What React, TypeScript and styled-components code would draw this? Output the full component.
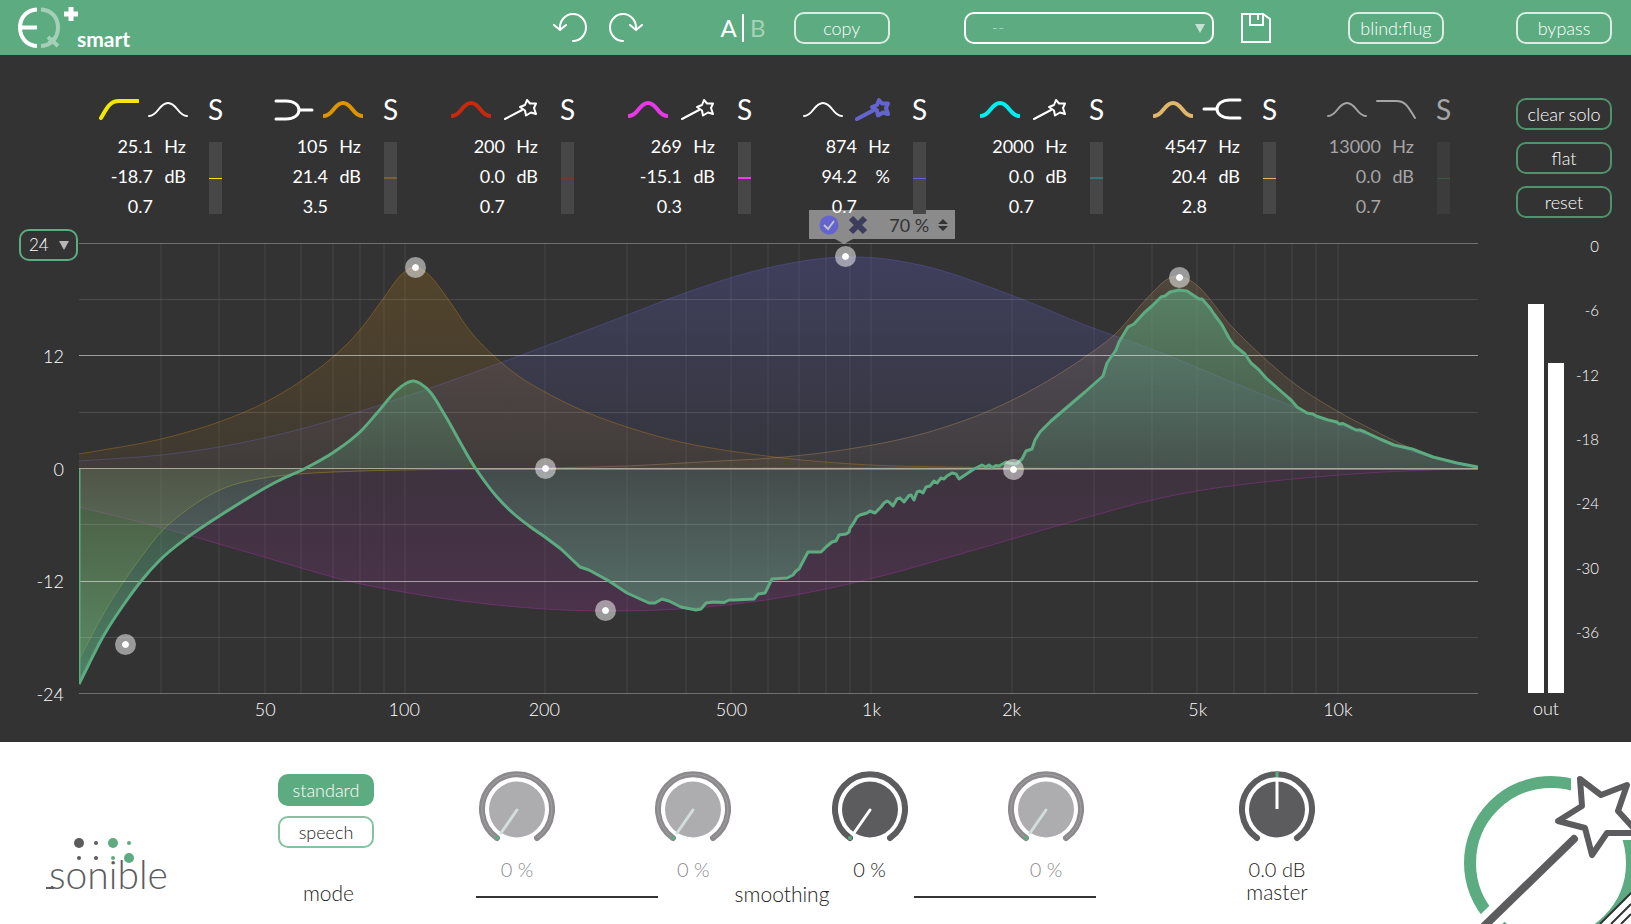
import React from "react";
import styled, { createGlobalStyle } from "styled-components";

const GREEN = "#5dab80";
const DARK = "#333333";
const GREY = "#5c5c5e";

const GlobalStyle = createGlobalStyle`
  *, *::before, *::after { box-sizing: border-box; }
  body {
    margin: 0;
    background: #fff;
    color: #fff;
    font-family: Lato, "Liberation Sans", sans-serif;
    font-size: 18px;
    font-weight: 300;
  }
  button, input, select { font: inherit; color: inherit; }
  button { padding: 0; border: 0; background: none; cursor: pointer; }
`;

const Page = styled.div`
  display: flex;
  flex-direction: column;
  min-height: 100vh;
`;

/* ---------- header ---------- */

const Header = styled.header`
  display: flex;
  align-items: center;
  height: 55px;
  padding: 0 19px 0 18px;
  background: ${GREEN};
`;

const Spacer = styled.div<{ $grow: number }>`
  flex: ${(p) => p.$grow} 1 0;
`;

const Brand = styled.div`
  display: flex;
  align-items: flex-end;
  width: 115px;
  height: 55px;
  padding-bottom: 6px;
`;

const BrandMark = styled.svg`
  flex: none;
  margin-right: -2px;
`;

const BrandName = styled.span`
  font-size: 21px;
  font-weight: 700;
  line-height: 20px;
`;

const IconButton = styled.button`
  display: flex;
  flex: none;
`;

const HistoryGroup = styled.div`
  display: flex;
  gap: 22px;
`;

const CompareGroup = styled.div`
  display: flex;
  align-items: center;
  justify-content: space-between;
  width: 43px;
`;

const CompareButton = styled.button<{ $dim?: boolean }>`
  display: flex;
  justify-content: center;
  width: 14px;
  font-size: 24px;
  font-weight: 400;
  line-height: 28px;
  opacity: ${(p) => (p.$dim ? 0.45 : 1)};
`;

const CompareRule = styled.span`
  width: 2px;
  height: 28px;
  background: #fff;
`;

const PillButton = styled.button<{ $line: string; $fill?: string; $ink?: string }>`
  flex: none;
  width: 96px;
  height: 32px;
  border: 2px solid ${(p) => p.$line};
  border-radius: 10px;
  background: ${(p) => p.$fill ?? "transparent"};
  color: ${(p) => p.$ink ?? "#fff"};
  line-height: 28px;
  white-space: nowrap;
`;

const Gap = styled.div<{ $w: number }>`
  flex: none;
  width: ${(p) => p.$w}px;
`;

const SelectWrap = styled.label<{ $w: number }>`
  position: relative;
  display: block;
  flex: none;
  width: ${(p) => p.$w}px;
  height: 32px;
`;

const SelectBox = styled.select<{ $line: string; $pad: number; $dim?: boolean }>`
  width: 100%;
  height: 32px;
  padding: 0 0 0 ${(p) => p.$pad}px;
  border: 2px solid ${(p) => p.$line};
  border-radius: 10px;
  background: transparent;
  color: ${(p) => (p.$dim ? "#b5d8c4" : "#fff")};
  font-size: 17px;
  line-height: 28px;
  appearance: none;
`;

const SelectArrow = styled.span<{ $right: number }>`
  position: absolute;
  top: 12px;
  right: ${(p) => p.$right}px;
  border: 5px solid transparent;
  border-top: 9px solid rgba(255, 255, 255, 0.65);
  border-bottom: 0;
  pointer-events: none;
`;

/* ---------- workspace ---------- */

const Workspace = styled.main`
  display: flex;
  flex: 1;
  padding: 42px 0 20px;
  background: ${DARK};
`;

const Editor = styled.section`
  flex: 1;
  min-width: 0;
`;

const BandStrip = styled.div`
  position: relative;
  z-index: 2;
  display: grid;
  grid-template-columns: 175fr 177fr 177fr 175fr 177fr 173fr 174fr 151fr;
  height: 132px;
  padding-left: 99px;
`;

const BandBox = styled.div<{ $off?: boolean }>`
  width: 123px;
  color: ${(p) => (p.$off ? "#a6a6a6" : "#fff")};
`;

const BandHead = styled.div`
  display: flex;
  align-items: center;
  height: 24px;
`;

const SoloButton = styled.button`
  width: 16px;
  margin-left: 20px;
  font-size: 28px;
  font-weight: 400;
  line-height: 24px;
`;

const BandBody = styled.div`
  display: flex;
  margin-top: 10px;
`;

const BandValues = styled.div`
  display: grid;
  grid-template-columns: 54px 33px;
  grid-auto-rows: 30px;
  font-weight: 400;
  line-height: 30px;
  text-align: right;
`;

const BandMeter = styled.div<{ $off?: boolean }>`
  display: flex;
  align-items: center;
  width: 13px;
  height: 72px;
  margin: 11px 0 0 23px;
  background: ${(p) => (p.$off ? "#3c3c3c" : "#474747")};
`;

const BandMeterLine = styled.div<{ $color: string; $thick?: boolean }>`
  width: 13px;
  height: ${(p) => (p.$thick ? 2 : 1)}px;
  background: ${(p) => p.$color};
`;

const ChartRow = styled.div`
  display: flex;
  padding-left: 19px;
`;

const GainAxis = styled.div`
  display: flex;
  flex-direction: column;
  justify-content: space-between;
  width: 60px;
  height: 483px;
`;

const GainLabel = styled.span`
  height: 32px;
  padding-right: 15px;
  line-height: 28px;
  text-align: right;
`;

const PlotColumn = styled.div`
  flex: 1;
  min-width: 0;
  padding-top: 14px;
`;

const Plot = styled.div`
  position: relative;
  height: 451px;
`;

const PlotSvg = styled.svg`
  display: block;
  width: 100%;
  height: 451px;
`;

const Handle = styled.button<{ $x: number; $y: number }>`
  position: absolute;
  left: ${(p) => p.$x}%;
  top: ${(p) => p.$y}%;
  width: 21px;
  height: 21px;
  margin: -10px 0 0 -10px;
  border: 7px solid rgba(255, 255, 255, 0.5);
  border-radius: 50%;
  background: #fff;
  background-clip: padding-box;
`;

const Popover = styled.div`
  position: absolute;
  left: 54.7%;
  top: -33px;
  display: flex;
  align-items: center;
  width: 146px;
  height: 29px;
  margin-left: -35px;
  padding-left: 10px;
  background: rgba(255, 255, 255, 0.43);
  color: #333;
  &::after {
    content: "";
    position: absolute;
    top: 29px;
    left: 26px;
    border: 9px solid transparent;
    border-top: 5px solid rgba(255, 255, 255, 0.43);
    border-bottom: 0;
  }
`;

const AmountInput = styled.input`
  width: 46px;
  margin-left: 21px;
  padding: 0;
  border: 0;
  background: none;
  font-weight: 400;
  line-height: 24px;
`;

const FreqAxis = styled.div`
  display: grid;
  grid-template-columns:
    minmax(0, 186fr) 0 minmax(0, 139fr) 0 minmax(0, 140fr) 0 minmax(0, 187fr) 0
    minmax(0, 140fr) 0 minmax(0, 140fr) 0 minmax(0, 186fr) 0 minmax(0, 140fr) 0 minmax(0, 140fr);
  margin-top: 3px;
`;

const FreqLabel = styled.span<{ $i: number }>`
  grid-row: 1;
  grid-column: ${(p) => p.$i * 2 + 2};
  justify-self: center;
  line-height: 24px;
`;

const Side = styled.aside`
  width: 153px;
  padding: 1px 19px 0 0;
`;

const SideButtons = styled.div`
  display: flex;
  flex-direction: column;
  align-items: flex-end;
  gap: 12px;
`;

const OutputMeter = styled.div`
  display: flex;
  margin: 18px 0 0 50px;
`;

const OutputBars = styled.div`
  display: flex;
  align-items: flex-end;
  gap: 4px;
  width: 36px;
  height: 457px;
`;

const OutputBar = styled.div`
  width: 16px;
  background: #fff;
`;

const OutputCaption = styled.div`
  width: 36px;
  margin-top: 3px;
  line-height: 24px;
  text-align: center;
`;

const OutputScale = styled.div`
  display: flex;
  flex-direction: column;
  justify-content: space-between;
  width: 35px;
  height: 406px;
  font-size: 15px;
  line-height: 20px;
  text-align: right;
`;

/* ---------- footer ---------- */

const Footer = styled.footer`
  display: flex;
  height: 182px;
  padding-left: 46px;
  background: #fff;
  color: #222;
  overflow: hidden;
`;

const MakerLogo = styled.svg`
  flex: none;
  align-self: flex-end;
  margin-bottom: 20px;
  overflow: visible;
`;

const ModeColumn = styled.div`
  display: flex;
  flex-direction: column;
  gap: 10px;
  padding-top: 32px;
`;

const Caption = styled.div`
  font-size: 21px;
  line-height: 24px;
  text-align: center;
`;

const ModeCaption = styled(Caption)`
  padding: 23px 0 0 5px;
`;

const Smoothing = styled.div`
  flex: 620 0 0;
  padding-top: 29px;
`;

const KnobRow = styled.div`
  display: flex;
  justify-content: space-between;
  padding: 0 12px 0 3px;
`;

const KnobBox = styled.label<{ $off?: boolean }>`
  position: relative;
  display: flex;
  flex-direction: column;
  align-items: center;
  width: 76px;
  color: ${(p) => (p.$off ? "#8c8c8c" : "#222")};
`;

const KnobInput = styled.input`
  position: absolute;
  inset: 0;
  width: 76px;
  height: 76px;
  margin: 0;
  opacity: 0;
`;

const KnobValue = styled.span`
  margin: 10px 0 1px;
  font-size: 20px;
  line-height: 24px;
  white-space: nowrap;
`;

const CaptionRow = styled.div`
  display: grid;
  grid-template-columns: 182fr 256fr 182fr;
  align-items: center;
`;

const Rule = styled.div`
  height: 2px;
  margin-top: 6px;
  background: ${DARK};
`;

const SmoothingCaption = styled(Caption)`
  padding-right: 8px;
`;

const Master = styled.div`
  width: 76px;
  padding-top: 29px;
`;

const MasterCaption = styled(Caption)`
  line-height: 20px;
`;

const LearnButton = styled.button`
  display: block;
  flex: none;
  width: 170px;
  height: 182px;
`;

/* ---------- icons ---------- */

type Kind = "lowcut" | "highcut" | "bell" | "lowshelf" | "highshelf" | "wand";

const shapes: Record<Kind, string> = {
  lowcut: "M2 21C7 13 10 4 20 4H39",
  highcut: "M1 4H20C30 4 32 10 39 21",
  bell: "M1 19C10 19 11 6 20 6S30 19 39 19",
  lowshelf: "M2 4H12C20 4 25 8 25 13S20 22 12 22H2M25 13H38",
  highshelf: "M38 3H28C20 3 15 7 15 12S20 21 28 21H38M15 12H2",
  wand:
    "M5 22L22 13M27 3L30 6.500L36 6.500L34 11L36 17L31 15.500L26 18.500L25 13.500L20 10L25 8Z",
};

function Shape({ kind, color, off }: { kind: Kind; color?: string; off?: boolean }) {
  const width = color ? 4 : kind.endsWith("shelf") ? 3 : 2;
  return (
    <svg width="40" height="24" viewBox="0 0 40 24" fill="none" strokeLinecap="round" strokeLinejoin="round">
      <path d={shapes[kind]} stroke={color ?? (off ? "#a6a6a6" : "#fff")} strokeWidth={width} />
    </svg>
  );
}

interface Band {
  shapes: [Kind, Kind];
  active: number;
  color: string;
  line: string;
  thick?: boolean;
  freq: string;
  gain: string;
  unit: string;
  q: string;
  off?: boolean;
}

const bands: Band[] = [
  { shapes: ["lowcut", "bell"], active: 0, color: "#f2e900", line: "#f2e900", freq: "25.1", gain: "-18.7", unit: "dB", q: "0.7" },
  { shapes: ["lowshelf", "bell"], active: 1, color: "#dd9400", line: "#7a6230", thick: true, freq: "105", gain: "21.4", unit: "dB", q: "3.5" },
  { shapes: ["bell", "wand"], active: 0, color: "#c8280c", line: "#74392f", freq: "200", gain: "0.0", unit: "dB", q: "0.7" },
  { shapes: ["bell", "wand"], active: 0, color: "#e838e8", line: "#f03af0", thick: true, freq: "269", gain: "-15.1", unit: "dB", q: "0.3" },
  { shapes: ["bell", "wand"], active: 1, color: "#6464d0", line: "#6464d0", freq: "874", gain: "94.2", unit: "%", q: "0.7" },
  { shapes: ["bell", "wand"], active: 0, color: "#00eef0", line: "#2f7a76", thick: true, freq: "2000", gain: "0.0", unit: "dB", q: "0.7" },
  { shapes: ["bell", "highshelf"], active: 0, color: "#dfb76a", line: "#dfb76a", freq: "4547", gain: "20.4", unit: "dB", q: "2.8" },
  { shapes: ["bell", "highcut"], active: -1, color: "#3f5f48", line: "#3b5a44", freq: "13000", gain: "0.0", unit: "dB", q: "0.7", off: true },
];

function BandControls({ band, index }: { band: Band; index: number }) {
  return (
    <BandBox $off={band.off}>
      <BandHead>
        {band.shapes.map((kind, i) => (
          <React.Fragment key={i}>
            {i === 1 && <Gap $w={9} />}
            <IconButton aria-label={`band ${index + 1} ${kind}`}>
              <Shape kind={kind} color={band.active === i ? band.color : undefined} off={band.off} />
            </IconButton>
          </React.Fragment>
        ))}
        <SoloButton aria-label={`solo band ${index + 1}`}>S</SoloButton>
      </BandHead>
      <BandBody>
        <BandValues>
          <span>{band.freq}</span>
          <span>Hz</span>
          <span>{band.gain}</span>
          <span>{band.unit}</span>
          <span>{band.q}</span>
        </BandValues>
        <BandMeter $off={band.off}>
          <BandMeterLine $color={band.line} $thick={band.thick} />
        </BandMeter>
      </BandBody>
    </BandBox>
  );
}

/* ---------- plot ---------- */

const PLOT_W = 1399;
const PLOT_H = 451;
const ZERO = 226;

type Pt = [number, number];

/* Points of a response curve, stored as a flat x, y list. */
function pairs(list: string): Pt[] {
  return list
    .trim()
    .split(/\s+/)
    .map((p) => p.split(",").map(Number) as Pt);
}

/* Cubic Bezier curve through the points. The slope at each point weighs the
   two neighbouring segments by their lengths, so uneven spacing gives no kinks. */
function spline(p: Pt[]): string {
  const n = p.length;
  const seg = (i: number) => (p[i + 1][1] - p[i][1]) / (p[i + 1][0] - p[i][0]);
  const slope = p.map((q, i) => {
    if (i === 0) return seg(0);
    if (i === n - 1) return seg(n - 2);
    const before = q[0] - p[i - 1][0];
    const after = p[i + 1][0] - q[0];
    return (seg(i - 1) * after + seg(i) * before) / (before + after);
  });
  let d = `M${p[0][0]} ${p[0][1]}`;
  for (let i = 0; i < n - 1; i++) {
    const [x0, y0] = p[i];
    const [x1, y1] = p[i + 1];
    const h = (x1 - x0) / 3;
    d += `C${x0 + h} ${y0 + slope[i] * h} ${x1 - h} ${y1 - slope[i + 1] * h} ${x1} ${y1}`;
  }
  return d;
}

function polyline(p: Pt[]): string {
  return "M" + p.map((q) => q.join(" ")).join("L");
}

const curves = [
  {
    id: "violet",
    color: "#6060d0",
    far: 0.28,
    near: 0.06,
    pts: pairs(`0,218 82,212 140,204 222,186 325,154 421,120 548,72 606,50 688,25 765,14 792,14.500 841,22
      932,52 1006,82 1088,112 1155,140 1215,164 1301,197 1341,211 1399,225`),
  },
  {
    id: "orange",
    color: "#d08a10",
    far: 0.22,
    near: 0.07,
    pts: pairs(`0,211 82,196 140,179 185,160 222,138 254,114 281,87 304,56 323,31 336,24 349,31 369,56 391,88
      416,114 441,134 466,149 507,169 548,184 606,200 651,208 704,215 791,222 871,224 1021,226`),
  },
  {
    id: "magenta",
    color: "#b830b8",
    far: 0.24,
    near: 0.08,
    pts: pairs(`0,264 88,286 140,301 185,314 222,325 269,338 324,349 408,361 466,366 527,368 600,366
      687,357 791,336 878,312 1006,275 1073,257 1118,248 1185,239 1236,234 1305,229 1354,227 1399,226`),
  },
  {
    id: "tan",
    color: "#c89c60",
    far: 0.2,
    near: 0.07,
    pts: pairs(`466,225 548,223 621,219 705,214 770,206 850,189 912,167 960,143 1006,114 1034,93 1073,50 1087,37 1099,33
      1112,38 1155,86 1183,113 1212,138 1258,168 1294,187 1329,204 1364,217 1399,225`),
  },
  {
    id: "yellow",
    color: "#c8b820",
    far: 0.22,
    near: 0.1,
    pts: pairs(`0,417 25,370 60,317 84,287 109,266 143,246 185,235 220,231 255,229 324,227 460,226 1399,226`),
  },
];

const sumSmooth = pairs(`0,441 25,392 48,357 63,337 81,317 109,294 145,270 199,238 225,226 255,209 282,188
  298,170 317,148 326,141 334,138 342,141 352,150 364,169 397,226 418,254 435,271 453,285 466,294`);

const sumRough = pairs(`466,294 482,306 501,324 510,327 530,338 548,350 570,360 576,360 583,356 590,358 602,364 617,367
  622,366 627,360 634,359 645,359.500 650,357 655,357 675,356 679,351 686,350 689,344 693,336 708,335 714,332 717,328
  720,326 729,309 742,309 747,304 753,299 757,298 760,292 767,291 770,289 771,285 774,281 778,274 781,272 788,270
  791,268 796,270 802,264 805,260 808,258 810,259 814,263 818,256 821,255 825,259 830,252.500 832,252 835,257 838,249
  841,248 844,250 847,244 851,243 855,238 858,240 862,235 865,236 868,233 873,230 877,231 880,236 886,232 895,226 903,222
  907,224 910,222 913,224.500 917,222.500 920,223 927,219 930,220 937,221 943,216 947,208 953,206 956,197 961,189 972,178
  986,166 1006,149 1024,133 1028,120 1037,107 1040,99 1049,84 1055,81 1065,70 1073,63 1082,54 1086,53 1091,49 1100,47
  1108,48 1117,54 1120,56 1123,56 1131,65 1135,71 1143,82 1150,95 1155,102 1166,111 1172,120 1180,127 1187,135 1204,150
  1212,157 1218,164 1228,170 1234,171 1237,173 1249,177 1258,179 1260,181 1264,180.500 1277,187 1281,187 1286,189
  1301,196 1315,202 1333,206 1354,214 1378,220 1399,224`);

const sumPath = spline(sumSmooth) + polyline(sumRough).replace(/^M/, "L");

function hz(f: number) {
  return (Math.log10(f / 20) / 3) * PLOT_W;
}

const gridFreqs = [
  30, 40, 50, 60, 70, 80, 90, 100, 200, 300, 400, 500, 600, 700, 800, 900, 1000, 2000, 3000, 4000, 5000, 6000, 7000,
  8000, 9000, 10000,
];

const gridGains: [number, number][] = [
  [0.5, 0.3],
  [56.5, 0.12],
  [112.5, 0.52],
  [169.5, 0.12],
  [281.5, 0.12],
  [338.5, 0.52],
  [394.5, 0.12],
  [450.5, 0.3],
];

function Fade({ id, color, far, near }: { id: string; color: string; far: number; near: number }) {
  return (
    <linearGradient id={id} gradientUnits="userSpaceOnUse" x1="0" y1="0" x2="0" y2={PLOT_H}>
      <stop offset="0" stopColor={color} stopOpacity={far} />
      <stop offset="0.5" stopColor={color} stopOpacity={near} />
      <stop offset="1" stopColor={color} stopOpacity={far} />
    </linearGradient>
  );
}

function ResponsePlot() {
  return (
    <PlotSvg viewBox={`0 0 ${PLOT_W} ${PLOT_H}`} preserveAspectRatio="none" fill="none">
      <defs>
        {curves.map((c) => (
          <Fade key={c.id} id={c.id} color={c.color} far={c.far} near={c.near} />
        ))}
        <Fade id="sum" color={GREEN} far={0.68} near={0.2} />
      </defs>
      {gridFreqs.map((f) => (
        <path key={f} d={`M${Math.round(hz(f))} 0V${PLOT_H}`} stroke="#fff" strokeOpacity="0.04" strokeWidth="2" />
      ))}
      {curves.map((c) => {
        const line = spline(c.pts);
        const first = c.pts[0];
        return (
          <g key={c.id}>
            <path d={`${line}L${PLOT_W} ${ZERO}H${first[0]}Z`} fill={`url(#${c.id})`} />
            <path d={line} stroke={c.color} strokeOpacity="0.35" strokeWidth="1" />
          </g>
        );
      })}
      <path d={`${sumPath}V${ZERO}H0Z`} fill="url(#sum)" />
      {gridGains.map(([y, o]) => (
        <path key={y} d={`M0 ${y}H${PLOT_W}`} stroke="#fff" strokeOpacity={o} />
      ))}
      <path d={`M0 225.500H${PLOT_W}`} stroke="#a8a896" />
      <path d={`M397 226.500H${PLOT_W}`} stroke="#858348" />
      <path d={`M0 441V${ZERO}`} stroke={GREEN} strokeWidth="3" />
      <path d={sumPath} stroke={GREEN} strokeWidth="3" strokeLinejoin="round" />
    </PlotSvg>
  );
}

const handles: Pt[] = [
  [46, 401],
  [336, 24],
  [466, 225],
  [526, 367],
  [766, 13],
  [934, 226],
  [1100, 34],
];

/* ---------- knobs ---------- */

function Knob({ label, value, centred, off }: { label: string; value: string; centred?: boolean; off?: boolean }) {
  return (
    <KnobBox $off={off}>
      <svg width="76" height="76" viewBox="0 0 76 76" fill="none">
        <path
          d="M18 67A35 35 0 1 1 58 67"
          stroke={off ? "#8c8a8d" : GREY}
          strokeWidth="6"
          strokeLinecap="round"
        />
        {off && <path d="M18 67A35 35 0 1 1 58 67" stroke="#a2a0a3" strokeWidth="1" />}
        <circle cx="38" cy="38.500" r="28" fill={off ? "#adadaf" : GREY} />
        {centred ? (
          <path d="M38 1V6" stroke={GREEN} strokeWidth="3" />
        ) : (
          <circle cx="18" cy="67" r="2" fill={GREEN} />
        )}
        <path
          d={centred ? "M38 38V10" : "M38 39L22 62"}
          stroke={off ? "#d3dedb" : "#fff"}
          strokeWidth="3"
          strokeLinecap={centred ? "butt" : "round"}
        />
      </svg>
      <KnobInput type="range" aria-label={label} defaultValue={centred ? 50 : 0} />
      <KnobValue>{value}</KnobValue>
    </KnobBox>
  );
}

export default function App() {
  return (
    <Page>
      <GlobalStyle />
      <Header>
        <Brand>
          <BrandMark width="61" height="44" viewBox="0 0 61 44" fill="none">
            <path d="M19 4.500C8 5 2 13 2 22.500S8 40.500 19 41M2 22.500H19" stroke="#fff" strokeWidth="4" />
            <path d="M23 4.500C34 5 40 13 40 22.500S34 40.500 23 41" stroke="#a5d0b8" strokeWidth="4" />
            <path d="M30 32L40 41M38 32L31 38" stroke="#a5d0b8" strokeWidth="4" />
            <path d="M53 2V16M46 9H60" stroke="#fff" strokeWidth="5" />
          </BrandMark>
          <BrandName>smart</BrandName>
        </Brand>
        <Spacer $grow={419} />
        <HistoryGroup>
          <IconButton aria-label="undo">
            <svg width="34" height="30" viewBox="0 0 34 30" fill="none" stroke="#fff" strokeWidth="2" strokeLinecap="round">
              <path d="M20 28A13 13.500 0 1 0 7 15M1 12L7 17L13 12" />
            </svg>
          </IconButton>
          <IconButton aria-label="redo">
            <svg width="34" height="30" viewBox="0 0 34 30" fill="none" stroke="#fff" strokeWidth="2" strokeLinecap="round">
              <path d="M14 28A13 13.500 0 1 1 27 15M33 12L27 17L21 12" />
            </svg>
          </IconButton>
        </HistoryGroup>
        <Spacer $grow={79} />
        <CompareGroup>
          <CompareButton>A</CompareButton>
          <CompareRule />
          <CompareButton $dim>B</CompareButton>
        </CompareGroup>
        <Gap $w={29} />
        <PillButton $line="#dcece3">copy</PillButton>
        <Spacer $grow={74} />
        <SelectWrap $w={250}>
          <SelectBox $line="#fff" $pad={26} $dim aria-label="preset">
            <option>--</option>
          </SelectBox>
          <SelectArrow $right={9} />
        </SelectWrap>
        <Gap $w={27} />
        <IconButton aria-label="save preset">
          <svg width="30" height="30" viewBox="0 0 30 30" fill="none" stroke="#fff" strokeWidth="2">
            <path d="M1 1H22L29 6V29H1ZM9 1V12H22V1M17 2V7" />
          </svg>
        </IconButton>
        <Spacer $grow={77} />
        <PillButton $line="#dcece3">blind:flug</PillButton>
        <Spacer $grow={72} />
        <PillButton $line="#dcece3">bypass</PillButton>
      </Header>

      <Workspace>
        <Editor>
          <BandStrip>
            {bands.map((b, i) => (
              <BandControls key={i} band={b} index={i} />
            ))}
          </BandStrip>
          <ChartRow>
            <GainAxis>
              <SelectWrap $w={59}>
                <SelectBox $line={GREEN} $pad={8} aria-label="gain range">
                  <option>24</option>
                </SelectBox>
                <SelectArrow $right={9} />
              </SelectWrap>
              {["12", "0", "-12", "-24"].map((g) => (
                <GainLabel key={g}>{g}</GainLabel>
              ))}
            </GainAxis>
            <PlotColumn>
              <Plot>
                <ResponsePlot />
                {handles.map(([x, y], i) => (
                  <Handle
                    key={i}
                    aria-label={`band handle ${i + 1}`}
                    $x={(x / PLOT_W) * 100}
                    $y={(y / PLOT_H) * 100}
                  />
                ))}
                <Popover>
                  <IconButton aria-label="accept">
                    <svg width="20" height="20" viewBox="0 0 20 20" fill="none">
                      <circle cx="10" cy="10" r="9.500" fill="#6464d0" />
                      <path d="M5 10L9 14L15 6" stroke="#c4c4c4" strokeWidth="2" />
                    </svg>
                  </IconButton>
                  <Gap $w={9} />
                  <IconButton aria-label="discard">
                    <svg width="20" height="20" viewBox="0 0 20 20" fill="none">
                      <path d="M3 3L17 17M17 3L3 17" stroke="#3c3c5c" strokeWidth="6" />
                    </svg>
                  </IconButton>
                  <AmountInput aria-label="amount" defaultValue="70 %" />
                  <Gap $w={3} />
                  <svg width="10" height="12" viewBox="0 0 10 12" fill="#333">
                    <path d="M5 0L10 5H0ZM5 12L10 7H0Z" />
                  </svg>
                </Popover>
              </Plot>
              <FreqAxis>
                {["50", "100", "200", "500", "1k", "2k", "5k", "10k"].map((f, i) => (
                  <FreqLabel key={f} $i={i}>
                    {f}
                  </FreqLabel>
                ))}
              </FreqAxis>
            </PlotColumn>
          </ChartRow>
        </Editor>
        <Side>
          <SideButtons>
            <PillButton $line="#4f936e">clear solo</PillButton>
            <PillButton $line="#4f936e">flat</PillButton>
            <PillButton $line="#4f936e">reset</PillButton>
          </SideButtons>
          <OutputMeter>
            <div>
              <OutputBars>
                <OutputBar style={{ height: 389 }} />
                <OutputBar style={{ height: 330 }} />
              </OutputBars>
              <OutputCaption>out</OutputCaption>
            </div>
            <OutputScale>
              {["0", "-6", "-12", "-18", "-24", "-30", "-36"].map((v) => (
                <span key={v}>{v}</span>
              ))}
            </OutputScale>
          </OutputMeter>
        </Side>
      </Workspace>

      <Footer>
        <MakerLogo width="121" height="66" viewBox="0 0 121 66">
          <g fill={GREY}>
            <circle cx="33" cy="5" r="5" />
            <circle cx="50" cy="5" r="2" />
            <circle cx="33" cy="20" r="2" />
            <circle cx="50" cy="20" r="2" />
            <path d="M0 49H8V51H0Z" />
          </g>
          <g fill={GREEN}>
            <circle cx="67" cy="5" r="5" />
            <circle cx="83" cy="5" r="2" />
            <circle cx="67" cy="20" r="2" />
            <circle cx="83" cy="20" r="5" />
          </g>
          <text x="3" y="51" fontSize="39" fill={GREY}>
            sonible
          </text>
        </MakerLogo>
        <Spacer $grow={111} />
        <ModeColumn>
          <PillButton $line={GREEN} $fill={GREEN} aria-pressed="true">
            standard
          </PillButton>
          <PillButton $line="#86c1a1" $ink="#222" aria-pressed="false">
            speech
          </PillButton>
          <ModeCaption>mode</ModeCaption>
        </ModeColumn>
        <Spacer $grow={102} />
        <Smoothing>
          <KnobRow>
            <Knob label="smoothing 1" value="0 %" off />
            <Knob label="smoothing 2" value="0 %" off />
            <Knob label="smoothing 3" value="0 %" />
            <Knob label="smoothing 4" value="0 %" off />
          </KnobRow>
          <CaptionRow>
            <Rule />
            <SmoothingCaption>smoothing</SmoothingCaption>
            <Rule />
          </CaptionRow>
        </Smoothing>
        <Spacer $grow={143} />
        <Master>
          <Knob label="master" value="0.0 dB" centred />
          <MasterCaption>master</MasterCaption>
        </Master>
        <Spacer $grow={146} />
        <LearnButton aria-label="learn">
          <svg width="170" height="182" viewBox="-1 0 170 182" fill="none">
            <circle cx="89" cy="121" r="81" stroke={GREEN} strokeWidth="12" />
            <path d="M109 20H170V98H140L118 70H109Z" fill="#fff" />
            <path d="M112 97L9 197" stroke="#fff" strokeWidth="22" />
            <path d="M112 97L13 193" stroke={GREY} strokeWidth="8" strokeLinecap="round" />
            <path
              d="M118 37L139 53L165 43L156 69L176 91L145 91L130 113L123 86L96 79L120 64Z"
              fill="#fff"
              stroke={GREY}
              strokeWidth="6"
              strokeLinejoin="round"
            />
            <path d="M138 182L169 151V182Z" fill="#fff" />
            <path d="M138 182L169 151M149 182L169 162M159 182L169 172" stroke="#333" strokeWidth="2" />
          </svg>
        </LearnButton>
      </Footer>
    </Page>
  );
}
